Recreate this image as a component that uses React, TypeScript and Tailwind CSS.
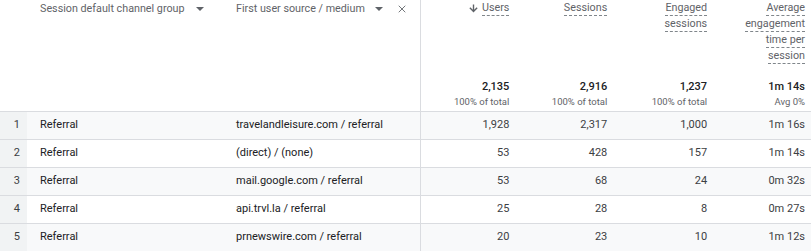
import { X } from 'lucide-react';

type Row = {
  channel: string;
  source: string;
  users: string;
  sessions: string;
  engaged: string;
  avg: string;
};

const rows: Row[] = [
  { channel: 'Referral', source: 'travelandleisure.com / referral', users: '1,928', sessions: '2,317', engaged: '1,000', avg: '1m 16s' },
  { channel: 'Referral', source: '(direct) / (none)', users: '53', sessions: '428', engaged: '157', avg: '1m 14s' },
  { channel: 'Referral', source: 'mail.google.com / referral', users: '53', sessions: '68', engaged: '24', avg: '0m 32s' },
  { channel: 'Referral', source: 'api.trvl.la / referral', users: '25', sessions: '28', engaged: '8', avg: '0m 27s' },
  { channel: 'Referral', source: 'prnewswire.com / referral', users: '20', sessions: '23', engaged: '10', avg: '1m 12s' },
];

// metric column widths (right edges at 509 / 607 / 707 / 805)
const colW = ['w-[96px]', 'w-[98px]', 'w-[100px]', 'w-[96px]'];
const colPad = ['pr-2', 'pr-2', 'pr-2', 'pr-[6px]'];

function Caret() {
  return (
    <svg width="8" height="4" viewBox="0 0 8 4" className="fill-[#5f6368]">
      <path d="M0 0h8L4 4z" />
    </svg>
  );
}

function Dashed({ children }: { children: React.ReactNode }) {
  return <span className="border-b border-dashed border-[#80868b] leading-[15px]">{children}</span>;
}

function MetricHeader({ lines, arrow, total, sub, i }: { lines: string[]; arrow?: boolean; total: string; sub: string; i: number }) {
  return (
    <div className={`${colW[i]} ${colPad[i]} flex flex-col items-end justify-between h-full pb-[2px]`}>
      <div className="flex flex-col items-end text-[10.75px] text-[#5f6368]">
        {lines.map((l, k) => (
          <div key={k} className="flex items-center h-[16px]">
            {arrow && k === 0 && (
              <svg width="11" height="11" viewBox="0 0 24 24" className="mr-[3px] fill-[#5f6368]">
                <path d="M21 11.5l-2.1-2.1-5.4 5.4V3h-3v11.8L5.1 9.4 3 11.5l9 9z" />
              </svg>
            )}
            <Dashed>{l}</Dashed>
          </div>
        ))}
      </div>
      <div className="flex flex-col items-end">
        <div className="h-[16px] flex items-center text-[11px] font-medium text-[#202124]">{total}</div>
        <div className="h-[14px] flex items-center text-[9.5px] text-[#5f6368]">{sub}</div>
      </div>
    </div>
  );
}

export default function App() {
  return (
    <div className="w-[811px] h-[251px] bg-white overflow-hidden font-['Roboto',sans-serif] text-[#202124]">
      {/* Header */}
      <div className="flex h-[112px] border-b border-[#dadce0]">
        <div className="w-[422px] border-r border-[#dadce0] flex items-start pt-[1px] text-[10.75px] text-[#5f6368]">
          <div className="w-[40px]" />
          <div className="w-[196px] flex items-center h-[16px] gap-[11px]">
            <span>Session default channel group</span>
            <Caret />
          </div>
          <div className="flex items-center h-[16px]">
            <span>First user source / medium</span>
            <span className="ml-[10px]"><Caret /></span>
            <X className="ml-[13px] w-[12px] h-[12px] text-[#5f6368]" strokeWidth={1.75} />
          </div>
        </div>
        <MetricHeader i={0} lines={['Users']} arrow total="2,135" sub="100% of total" />
        <MetricHeader i={1} lines={['Sessions']} total="2,916" sub="100% of total" />
        <MetricHeader i={2} lines={['Engaged', 'sessions']} total="1,237" sub="100% of total" />
        <MetricHeader i={3} lines={['Average', 'engagement', 'time per', 'session']} total="1m 14s" sub="Avg 0%" />
      </div>

      {/* Rows */}
      {rows.map((r, idx) => (
        <div
          key={idx}
          className={`flex h-[28px] border-b border-[#dadce0] text-[11px] ${idx % 2 === 0 ? 'bg-[#f8f9fa]' : 'bg-white'}`}
        >
          <div className="w-[422px] border-r border-[#dadce0] flex items-center">
            <div className="w-[27px] h-full bg-[#f1f3f4] flex items-center justify-end pr-[7px] text-[#3c4043]">{idx + 1}</div>
            <div className="w-[209px] pl-[13px]">{r.channel}</div>
            <div>{r.source}</div>
          </div>
          {[r.users, r.sessions, r.engaged, r.avg].map((v, i) => (
            <div key={i} className={`${colW[i]} ${colPad[i]} flex items-center justify-end text-[#3c4043]`}>
              {v}
            </div>
          ))}
        </div>
      ))}
    </div>
  );
}
